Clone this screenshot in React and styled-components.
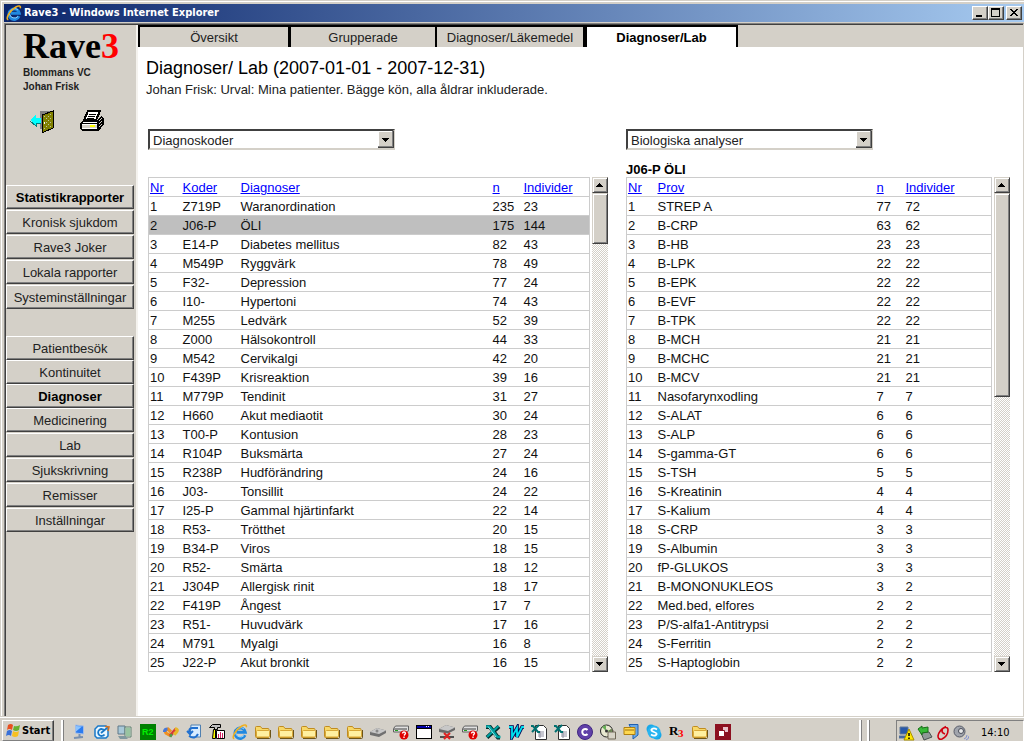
import React, { useState } from 'react'
import styled, { createGlobalStyle } from 'styled-components'

const GlobalStyle = createGlobalStyle`
  * {
    box-sizing: border-box;
  }

  body {
    margin: 0;
    background: #d4d0c8;
    color: #000;
    font-family: 'Liberation Sans', Arial, sans-serif;
    font-size: 13px;
  }

  button,
  select {
    font: inherit;
    color: inherit;
    border-radius: 0;
  }
`

const Desktop = styled.div`
  min-height: 100vh;
  display: flex;
  flex-direction: column;
`

const Window = styled.div`
  flex: 1;
  display: flex;
  flex-direction: column;
  border-top: 1px solid #d4d0c8;
  border-left: 1px solid #d4d0c8;
`

const Frame = styled.div`
  flex: 1;
  display: flex;
  flex-direction: column;
  border-top: 1px solid #fff;
  border-left: 1px solid #fff;
  padding: 2px 0 0 2px;
`

const TitleBar = styled.header`
  display: flex;
  align-items: center;
  height: 18px;
  padding: 0 2px;
  background: linear-gradient(to right, #0a246a, #a6caf0);
  color: #fff;

  h1 {
    flex: 1;
    margin: 0 0 0 2px;
    font: bold 11px/18px 'DejaVu Sans Condensed', 'DejaVu Sans', sans-serif;
  }

  svg {
    display: block;
  }
`

const CaptionButton = styled.button`
  width: 16px;
  height: 14px;
  padding: 0;
  margin-left: ${props => (props.$apart ? '2px' : '0')};
  background: #d4d0c8;
  border: 1px solid;
  border-color: #fff #404040 #404040 #fff;
  box-shadow: inset -1px -1px 0 #808080;
`

const Viewport = styled.div`
  flex: 1;
  display: flex;
  margin-top: 1px;
  border-top: 1px solid #808080;
  border-left: 1px solid #808080;
  border-right: 1px solid #d4d0c8;
  box-shadow: inset 1px 1px 0 #404040;
  padding: 1px 0 0 1px;
`

const Sidebar = styled.aside`
  flex: none;
  width: 132px;
  padding-right: 2px;
  border-right: 2px solid #f4f2ee;
`

const Logo = styled.div`
  padding: 2px 0 0 17px;
  font: bold 36px/39px 'Liberation Serif', 'Times New Roman', serif;

  span {
    color: #f00;
  }
`

const Unit = styled.div`
  padding-left: 17px;
  font-size: 10px;
  font-weight: bold;
  line-height: 14px;
  color: #222;
`

const Tools = styled.div`
  display: flex;
  gap: 26px;
  padding: 16px 0 0 24px;
  height: 91px;

  button {
    width: 24px;
    height: 24px;
    padding: 0;
    border: 0;
    background: none;
  }
`

const Nav = styled.nav`
  display: flex;
  flex-direction: column;
  gap: ${props => props.$gap}px;
  margin-top: ${props => props.$top}px;
`

const NavButton = styled.button`
  height: 24px;
  padding: 0;
  background: #d4d0c8;
  border: 1px solid;
  border-color: #fff #404040 #404040 #fff;
  box-shadow: inset -1px -1px 0 #808080;
  font-weight: ${props => (props.$active ? 'bold' : 'normal')};
  color: ${props => (props.$active ? '#000' : '#222')};
  white-space: nowrap;
`

const Main = styled.main`
  flex: 1;
  min-width: 0;
  background: #fff;
`

const Tabs = styled.div`
  display: flex;
  height: 22px;
  background: #d4d0c8;
`

const Tab = styled.button`
  width: ${props => props.$width}px;
  padding: 0;
  border: solid #000;
  border-width: 2px ${props => props.$right}px 0 ${props => props.$left}px;
  background: ${props => (props.$active ? '#fff' : '#d4d0c8')};
  font-weight: ${props => (props.$active ? 'bold' : 'normal')};
  color: ${props => (props.$active ? '#000' : '#222')};
`

const Report = styled.section`
  padding: 11px 13px 0 10px;

  h2 {
    margin: 0 0 0 -2px;
    font-size: 18px;
    font-weight: normal;
    line-height: 20px;
  }

  p {
    margin: 3px 0 30px -2px;
    line-height: 18px;
    color: #222;
  }
`

const Panels = styled.div`
  display: grid;
  grid-template-columns: 460fr 384fr;
  gap: 18px;
`

const SelectBox = styled.label`
  position: relative;
  display: block;
  width: 247px;

  select {
    display: block;
    width: 100%;
    height: 21px;
    padding: 1px 20px 0 3px;
    appearance: none;
    background: #fff;
    border: 2px solid;
    border-color: #404040 #d4d0c8 #d4d0c8 #404040;
    outline: 0;
    color: #222;
  }

  svg {
    position: absolute;
    top: 2px;
    right: 1px;
    pointer-events: none;
  }
`

const PanelTitle = styled.h3`
  height: 27px;
  margin: 0;
  padding-top: 12px;
  font-size: 13px;
  line-height: 15px;
`

const Listing = styled.div`
  display: flex;
  gap: 2px;
`

const Table = styled.table`
  flex: 1;
  min-width: 0;
  table-layout: fixed;
  border-collapse: collapse;

  th,
  td {
    height: 19px;
    padding: 1px 0 0 2px;
    border: solid #ccc;
    border-width: 1px 0;
    font-weight: normal;
    line-height: 17px;
    text-align: left;
    white-space: nowrap;
  }

  th:first-child,
  td:first-child {
    border-left-width: 1px;
    padding-left: 1px;
  }

  th:last-child,
  td:last-child {
    border-right-width: 1px;
  }

  a {
    color: #00f;
  }
`

const Row = styled.tr`
  background: ${props => (props.$selected ? '#bfbfbf' : 'transparent')};
  color: #111;
  cursor: default;
`

const ScrollBar = styled.div`
  flex: none;
  width: 16px;
  display: flex;
  flex-direction: column;
  background: repeating-conic-gradient(#fff 0 25%, #d4d0c8 0 50%) 0 0 / 2px 2px;
`

const ScrollButton = styled.button`
  width: 16px;
  height: 16px;
  padding: 0;
  background: #d4d0c8;
  border: 1px solid;
  border-color: #d4d0c8 #404040 #404040 #d4d0c8;
  box-shadow: inset 1px 1px 0 #fff, inset -1px -1px 0 #808080;

  svg {
    display: block;
  }
`

const ScrollTrack = styled.div`
  flex: 1;
`

const ScrollThumb = styled.div`
  height: ${props => props.$size}%;
  background: #d4d0c8;
  border: 1px solid;
  border-color: #d4d0c8 #404040 #404040 #d4d0c8;
  box-shadow: inset 1px 1px 0 #fff, inset -1px -1px 0 #808080;
`

const TaskBar = styled.footer`
  display: flex;
  align-items: stretch;
  height: 25px;
  padding-top: 3px;
  background: #d4d0c8;
  box-shadow: inset 0 2px 0 -1px #fff;
  border-top: 1px solid #d4d0c8;
`

const StartButton = styled.button`
  display: flex;
  align-items: center;
  gap: 1px;
  width: 52px;
  margin-left: 2px;
  padding: 0 0 0 2px;
  background: #d4d0c8;
  border: 1px solid;
  border-color: #fff #404040 #808080 #fff;
  box-shadow: inset -1px 0 0 #808080;
  font: bold 11px/16px 'DejaVu Sans Condensed', 'DejaVu Sans', sans-serif;
`

const Grip = styled.span`
  width: 3px;
  margin-left: ${props => props.$space}px;
  border: solid;
  border-width: 0 1px 0 2px;
  border-color: #808080 #808080 #fff #fff;
`

const QuickLaunch = styled.div`
  flex: 1;
  display: flex;
  align-items: center;
  gap: 7px;
  padding: 2px 0 0 7px;

  svg {
    flex: none;
    display: block;
  }
`

const Tray = styled.div`
  display: flex;
  align-items: center;
  gap: 2px;
  width: 128px;
  margin-left: 26px;
  padding: 4px 0 0 2px;
  border: 1px solid;
  border-color: #808080 #fff #fff #808080;
  border-bottom: 0;

  time {
    margin-left: 10px;
    font: 11px/16px 'DejaVu Sans Condensed', 'DejaVu Sans', sans-serif;
  }
`

const ExplorerIcon = () => (
  <svg width='16' height='16' viewBox='0 0 16 16' fill='none'>
    <path d='M13 11.2A5.2 5.2 0 1 1 13.3 8.200H5' stroke='#2088e0' strokeWidth='3' />
    <path d='M12 11.500A5 5 0 0 1 3.500 9M4 6.500a5 5 0 0 1 8-1.500' stroke='#90d4ff' strokeWidth='1' />
    <path d='M2.3 14.8C-1 14 3.8 5.5 9.5 2.2c3.5-2 5.5-1.4 4.7 1' stroke='#f0b020' strokeWidth='1.6' />
  </svg>
)

const Folder = () => (
  <svg width='16' height='16' viewBox='0 0 16 16'>
    <path d='M2 14.500h12.500q1 0 1-1V6' fill='none' stroke='#6c5418' />
    <path d='M.5 12.500v-9q0-1 1-1h4l1.500 2h6q1 0 1 1v7q0 1-1 1h-11.500q-1 0-1-1z' fill='#f8d868' stroke='#c08c20' />
    <path d='M1.500 13V7.500q0-1 1-1h11q1 0 1 1V12q0 1-1 1z' fill='#fff0a0' stroke='#d8a838' />
  </svg>
)

const Computer = () => (
  <svg width='16' height='16' viewBox='0 0 16 16'>
    <path d='M4.500 1l8 1v8l-8-1z' fill='#2c7cf0' stroke='#a0bce8' />
    <path d='M5 2l6 .5-6 5z' fill='#8cc4ff' />
    <path d='M8.500 10v3M3 14l9-1' stroke='#7890b0' strokeWidth='2' />
  </svg>
)

const Outlook = () => (
  <svg width='16' height='16' viewBox='0 0 16 16' fill='none' stroke='#1878c8'>
    <path d='M4 2h8l2 2v8l-2 2H3l-2-2V5z' fill='#e8f6ff' strokeWidth='1.500' />
    <path d='M10.500 6.500a3.500 3.500 0 1 0 0 4M7 9l6-5' strokeWidth='1.800' />
    <path d='M11 2.500l4 .5-1 4' stroke='#d07020' strokeWidth='1.500' />
  </svg>
)

const Machines = () => (
  <svg width='16' height='16' viewBox='0 0 16 16'>
    <path d='M1 2h7v8H1z' fill='#a8c8d8' stroke='#607888' />
    <path d='M8 3h6v10H8z' fill='#d8e8d8' stroke='#608070' />
    <path d='M9 5h4M9 7h4M9 9h4M9 11h4' stroke='#58a068' />
    <path d='M1 12h7l3 3H3z' fill='#8098a0' />
  </svg>
)

const Rave2 = () => (
  <svg width='16' height='16' viewBox='0 0 16 16'>
    <path d='M0 0h16v16H0z' fill='#008000' />
    <text x='2' y='11' fill='#00f000' fontSize='9' fontWeight='bold' fontFamily='Liberation Sans, sans-serif'>
      R2
    </text>
  </svg>
)

const Ribbon = () => (
  <svg width='16' height='16' viewBox='0 0 16 16' fill='none' strokeWidth='3.2'>
    <path d='M8 12L3 9q-2-3 2-4l3 3' stroke='#f09020' />
    <path d='M1.500 8q0-3 3-3' stroke='#4878d8' />
    <path d='M7 12l6-7' stroke='#d83838' />
    <path d='M12 4.500q4 1 1 4l-2 2' stroke='#e8b828' />
    <path d='M7 11l2 1' stroke='#48a048' />
  </svg>
)

const SyncDoc = () => (
  <svg width='16' height='16' viewBox='0 0 16 16'>
    <path d='M5 1h9.500v12H4z' fill='#d8ecff' stroke='#5080b0' />
    <path d='M12 4H6q-4 1-2 4M1 7l3 3 3-3M3 12q6 4 9-2' fill='none' stroke='#2070d0' strokeWidth='2' />
  </svg>
)

const ToolChart = () => (
  <svg width='16' height='16' viewBox='0 0 16 16'>
    <path d='M.5 3.500l3-3h8v3h-3v2h-3v-2z' fill='#c0c0c0' stroke='#000' />
    <path d='M4.500 5.500h2v9h-3z' fill='#ff0' stroke='#000' />
    <path d='M7.500 6.500h8v8h-8z' fill='#fff' stroke='#000' />
    <path d='M9.500 14v-4M11.500 14V8M13.500 14v-5' stroke='#d02060' />
  </svg>
)

const Drive = () => (
  <svg width='16' height='16' viewBox='0 0 16 16'>
    <path d='M0 8l7-4 9 2.500V9l-7 4-9-2z' fill='#707070' />
    <path d='M0 8l7-4 9 2.500L9 10z' fill='#c8c8c8' />
    <circle cx='7' cy='7' r='1.500' fill='#888' />
  </svg>
)

const DriveHelp = () => (
  <svg width='16' height='16' viewBox='0 0 16 16'>
    <path d='M.5 4.500l2-2.500h13v4l-1 2H.5z' fill='#e0e0e0' stroke='#606060' />
    <path d='M1 5h13' stroke='#404040' />
    <path d='M2 6.500h3' stroke='#20a020' />
    <circle cx='11' cy='11' r='4.500' fill='#e00000' />
    <path d='M9.500 9.500q0-1.500 1.500-1.500t1.500 1.500L11 11.500M11 12.500V14' fill='none' stroke='#fff' strokeWidth='1.300' />
  </svg>
)

const AppWindow = () => (
  <svg width='16' height='16' viewBox='0 0 16 16' shapeRendering='crispEdges'>
    <path d='M0 1h16v14H0z' fill='#000' />
    <path d='M1 5h14v9H1z' fill='#fff' />
    <path d='M1 2h14v2H1z' fill='#0000a8' />
    <path d='M10 2h1v1h-1zM12 2h1v1h-1z' fill='#fff' />
  </svg>
)

const DriveBroken = () => (
  <svg width='16' height='16' viewBox='0 0 16 16'>
    <path d='M0 5l7-4 9 2.500V6L9 9.500 0 8z' fill='#686868' />
    <path d='M0 5l7-4 9 2.500L9 7z' fill='#c8c8c8' />
    <path d='M1 13h14' stroke='#505050' strokeWidth='2' />
    <path d='M5 9l6 6M11 9l-6 6' stroke='#e02020' strokeWidth='2' />
  </svg>
)

const Excel = () => (
  <svg width='16' height='16' viewBox='0 0 16 16' fill='none'>
    <path d='M1 3h4l8 10.500h2M14 2.500L2 13.500' stroke='#002828' strokeWidth='4' />
    <path d='M1 2.500h3.500l8 10.500h3M13.500 2L2 13' stroke='#00a0a0' strokeWidth='2.400' />
    <path d='M3 2.500l8 10.500' stroke='#90f0f0' />
  </svg>
)

const Word = () => (
  <svg width='16' height='16' viewBox='0 0 16 16' fill='none'>
    <path d='M1 3h3v10l5-9v9l5-10h2' stroke='#000050' strokeWidth='3.600' />
    <path d='M1 3h3v10l5-9v9l5-10h2' stroke='#00e0f0' strokeWidth='1.800' />
  </svg>
)

const Sheet = () => (
  <svg width='16' height='16' viewBox='0 0 16 16' fill='none'>
    <path d='M4.500 1.500h8l3 3v11h-11z' fill='#fff' stroke='#303030' />
    <path d='M7 8h6M7 10h6M7 12h6M9 7v7' stroke='#9090a0' />
    <path d='M0 2h2l5 6h2M8 1L1 8' stroke='#007070' strokeWidth='2' />
  </svg>
)

const PurpleC = () => (
  <svg width='16' height='16' viewBox='0 0 16 16' fill='none'>
    <circle cx='8' cy='8' r='7.500' fill='#6040a8' stroke='#402880' />
    <path d='M10.500 6a3 3 0 1 0 0 4' stroke='#fff' strokeWidth='2' />
  </svg>
)

const DiscBox = () => (
  <svg width='16' height='16' viewBox='0 0 16 16'>
    <circle cx='6.500' cy='7' r='6' fill='#e8e8d0' stroke='#202020' />
    <path d='M6 7L2 3l4-2zM7 7l5-2v4z' fill='#68b058' />
    <circle cx='6.500' cy='7' r='1.500' fill='#333' />
    <path d='M8 8h7.500v7H8z' fill='#d8d4c8' stroke='#706858' />
    <path d='M10 8V6h3v2' fill='none' stroke='#706858' />
  </svg>
)

const ZipBox = () => (
  <svg width='16' height='16' viewBox='0 0 16 16'>
    <path d='M6 .5h9V11l-5 4V8z' fill='#68a8e8' stroke='#2060b0' />
    <path d='M1 3.500h11v7H1z' fill='#ffd850' stroke='#b08010' />
    <path d='M2 6h9' stroke='#a07008' />
  </svg>
)

const Skype = () => (
  <svg width='16' height='16' viewBox='0 0 16 16'>
    <circle cx='5' cy='5' r='4.500' fill='#18a8e8' />
    <circle cx='11' cy='11' r='4.500' fill='#18a8e8' />
    <circle cx='8' cy='8' r='6.500' fill='#28b4f0' />
    <path d='M11 5.500q-3-2-5-.5t2 3 2 3-5-.5' fill='none' stroke='#fff' strokeWidth='1.800' />
  </svg>
)

const Rave3Icon = () => (
  <svg width='16' height='16' viewBox='0 0 16 16' fontWeight='bold' fontFamily='Liberation Serif, serif'>
    <text x='0' y='11' fontSize='13'>
      R
    </text>
    <text x='9' y='13' fontSize='11' fill='#f00'>
      3
    </text>
  </svg>
)

const RedSquares = () => (
  <svg width='16' height='16' viewBox='0 0 16 16'>
    <path d='M0 0h16v16H0z' fill='#8c1020' />
    <path d='M8 3h5v5H8z' fill='#e8c0c8' />
    <path d='M3.500 6.500h6v6h-6z' fill='#fff' stroke='#8c1020' />
  </svg>
)

const WindowsFlag = () => (
  <svg width='16' height='16' viewBox='0 0 16 16'>
    <path d='M3 2q3-2 5 0L7 7Q4 5 2 7z' fill='#e85020' />
    <path d='M9 3q3 1 6-1l-1 5q-3 2-6 0z' fill='#68b030' />
    <path d='M2 8q3-2 5 0l-1 5q-2-2-5 0z' fill='#3870d8' />
    <path d='M8 8q3 2 6 0l-1 5q-3 2-6 0z' fill='#f8c020' />
  </svg>
)

const NetworkWarning = () => (
  <svg width='16' height='16' viewBox='0 0 16 16'>
    <path d='M1 2h8v7H1zM0 11h9v2H0z' fill='#2858a8' stroke='#607898' />
    <path d='M10 4l5 11H5z' fill='#ffe800' stroke='#a89000' />
    <path d='M10 8v3M10 12.500V14' stroke='#000' strokeWidth='1.500' />
  </svg>
)

const SafeRemove = () => (
  <svg width='16' height='16' viewBox='0 0 16 16'>
    <path d='M4 8l8-1 3 5-8 3z' fill='#909898' stroke='#485050' />
    <path d='M1 4l4-3v2l6-1v5L5 8v2z' fill='#38b838' stroke='#187018' />
  </svg>
)

const RedLoop = () => (
  <svg width='16' height='16' viewBox='0 0 16 16' fill='none'>
    <path d='M11 1.500Q4 5 3 11q0 4 4 3 6-3 6-9 0-3-3-2.500T7 6q0 2 3 3' stroke='#d00010' strokeWidth='1.600' />
  </svg>
)

const Speaker = () => (
  <svg width='16' height='16' viewBox='0 0 16 16' fill='none'>
    <circle cx='6.500' cy='6.500' r='5.500' fill='#a0a4ac' stroke='#585c68' />
    <circle cx='8' cy='6' r='2.500' fill='#e8e8e8' stroke='#484c58' />
    <path d='M11 14q3-1 3-4M13 15q3-1 3-4' stroke='#8090d0' />
  </svg>
)

const ExitDoor = () => (
  <svg width='24' height='24' viewBox='0 0 24 24' shapeRendering='crispEdges'>
    <path d='M10 1h13v18H10z' fill='#808080' />
    <path d='M12 5l11-4v17l-11 5z' fill='#808000' stroke='#000' />
    <path
      d='M14 6h1v1h-1zM16 8h1v1h-1zM18 6h1v1h-1zM20 4h1v1h-1zM20 8h1v1h-1zM18 10h1v1h-1zM16 12h1v1h-1zM20 12h1v1h-1zM18 14h1v1h-1zM16 16h1v1h-1zM20 16h1v1h-1zM14 18h1v1h-1z'
      fill='#c0c0a0'
    />
    <path d='M14 12h1v2h-1z' fill='#fff' />
    <path d='M0 10l6-5v3h5v5H6v3z' fill='#0ff' />
    <path d='M0 11l6 5v-3h5' fill='none' stroke='#008080' />
  </svg>
)

const Printer = () => (
  <svg width='24' height='24' viewBox='0 0 24 24' shapeRendering='crispEdges'>
    <path d='M8 1h12l-4 9H4z' fill='#fff' stroke='#000' strokeWidth='2' />
    <path d='M9 4h7M8 6h7M7 8h7' stroke='#000' />
    <path d='M3 10h14l4-4 3 2v6l-5 7H2l-2-3v-5z' fill='#000' />
    <path d='M3 12h14l-1 1H2z' fill='#fff' />
    <path d='M2 14h15v1H2zM2 18h15v1H2z' fill='#fff' />
    <path d='M2 15h15v3H2z' fill='#d4d0c8' />
    <path d='M10 15h5v2h-5z' fill='#ff0' />
    <path d='M19 11l3-3M19 14l3-3M19 17l3-3' stroke='#d4d0c8' />
  </svg>
)

const ArrowUp = () => (
  <svg width='14' height='14' shapeRendering='crispEdges'>
    <path d='M6 5h1v1h1v1h1v1h1v1H3V8h1V7h1V6h1z' />
  </svg>
)

const ArrowDown = () => (
  <svg width='14' height='14' shapeRendering='crispEdges'>
    <path d='M3 5h7v1H9v1H8v1H7v1H6V8H5V7H4V6H3z' />
  </svg>
)

const SelectArrow = () => (
  <svg width='16' height='17' shapeRendering='crispEdges'>
    <path d='M0 0h16v17H0z' fill='#404040' />
    <path d='M0 0h15v16H0z' fill='#808080' />
    <path d='M0 0h14v15H0z' fill='#fff' />
    <path d='M1 1h13v14H1z' fill='#d4d0c8' />
    <path d='M4 7h7v1h-1v1H9v1H8v1H7v-1H6V9H5V8H4z' />
  </svg>
)

const launchIcons = [
  Computer, Outlook, Machines, Rave2, Ribbon, SyncDoc, ToolChart, ExplorerIcon,
  Folder, Folder, Folder, Folder, Folder, Drive, DriveHelp, AppWindow,
  DriveBroken, DriveHelp, Excel, Word, Sheet, Sheet, PurpleC, DiscBox,
  ZipBox, Skype, Rave3Icon, Folder, RedSquares
]

const trayIcons = [NetworkWarning, SafeRemove, RedLoop, Speaker]

const menus = [
  {
    top: 0,
    gap: 1,
    items: ['Statistikrapporter', 'Kronisk sjukdom', 'Rave3 Joker', 'Lokala rapporter', 'Systeminställningar']
  },
  { top: 27, gap: 0, items: ['Patientbesök', 'Kontinuitet', 'Diagnoser', 'Medicinering'] },
  { top: 1, gap: 1, items: ['Lab', 'Sjukskrivning', 'Remisser', 'Inställningar'] }
]

const activeItems = ['Statistikrapporter', 'Diagnoser']

const tabs = [
  { label: 'Översikt', width: 151, left: 2, right: 1 },
  { label: 'Grupperade', width: 147, left: 2, right: 1 },
  { label: 'Diagnoser/Läkemedel', width: 149, left: 1, right: 2 },
  { label: 'Diagnoser/Lab', width: 153, left: 2, right: 2 }
]

const diagnoses = [
  ['Z719P', 'Waranordination', 235, 23],
  ['J06-P', 'ÖLI', 175, 144],
  ['E14-P', 'Diabetes mellitus', 82, 43],
  ['M549P', 'Ryggvärk', 78, 49],
  ['F32-', 'Depression', 77, 24],
  ['I10-', 'Hypertoni', 74, 43],
  ['M255', 'Ledvärk', 52, 39],
  ['Z000', 'Hälsokontroll', 44, 33],
  ['M542', 'Cervikalgi', 42, 20],
  ['F439P', 'Krisreaktion', 39, 16],
  ['M779P', 'Tendinit', 31, 27],
  ['H660', 'Akut mediaotit', 30, 24],
  ['T00-P', 'Kontusion', 28, 23],
  ['R104P', 'Buksmärta', 27, 24],
  ['R238P', 'Hudförändring', 24, 16],
  ['J03-', 'Tonsillit', 24, 22],
  ['I25-P', 'Gammal hjärtinfarkt', 22, 14],
  ['R53-', 'Trötthet', 20, 15],
  ['B34-P', 'Viros', 18, 15],
  ['R52-', 'Smärta', 18, 12],
  ['J304P', 'Allergisk rinit', 18, 17],
  ['F419P', 'Ångest', 17, 7],
  ['R51-', 'Huvudvärk', 17, 16],
  ['M791', 'Myalgi', 16, 8],
  ['J22-P', 'Akut bronkit', 16, 15]
]

const tests = [
  ['STREP A', 77, 72],
  ['B-CRP', 63, 62],
  ['B-HB', 23, 23],
  ['B-LPK', 22, 22],
  ['B-EPK', 22, 22],
  ['B-EVF', 22, 22],
  ['B-TPK', 22, 22],
  ['B-MCH', 21, 21],
  ['B-MCHC', 21, 21],
  ['B-MCV', 21, 21],
  ['Nasofarynxodling', 7, 7],
  ['S-ALAT', 6, 6],
  ['S-ALP', 6, 6],
  ['S-gamma-GT', 6, 6],
  ['S-TSH', 5, 5],
  ['S-Kreatinin', 4, 4],
  ['S-Kalium', 4, 4],
  ['S-CRP', 3, 3],
  ['S-Albumin', 3, 3],
  ['fP-GLUKOS', 3, 3],
  ['B-MONONUKLEOS', 3, 2],
  ['Med.bed, elfores', 2, 2],
  ['P/S-alfa1-Antitrypsi', 2, 2],
  ['S-Ferritin', 2, 2],
  ['S-Haptoglobin', 2, 2]
]

const Select = ({ label, option }) => (
  <SelectBox>
    <select aria-label={label}>
      <option>{option}</option>
    </select>
    <SelectArrow />
  </SelectBox>
)

const DataList = ({ columns, rows, selected, onSelect, thumb }) => (
  <Listing>
    <Table>
      <colgroup>
        {columns.map(column => (
          <col key={column.name} width={column.width} />
        ))}
      </colgroup>
      <thead>
        <tr>
          {columns.map(column => (
            <th key={column.name}>
              <a href='#sort'>{column.name}</a>
            </th>
          ))}
        </tr>
      </thead>
      <tbody>
        {rows.map((row, index) => (
          <Row
            key={row[0]}
            $selected={index === selected}
            onClick={() => onSelect && onSelect(index)}
          >
            <td>{index + 1}</td>
            {row.map((value, i) => (
              <td key={i}>{value}</td>
            ))}
          </Row>
        ))}
      </tbody>
    </Table>
    <ScrollBar>
      <ScrollButton aria-label='Upp'>
        <ArrowUp />
      </ScrollButton>
      <ScrollTrack>
        <ScrollThumb $size={thumb} />
      </ScrollTrack>
      <ScrollButton aria-label='Ned'>
        <ArrowDown />
      </ScrollButton>
    </ScrollBar>
  </Listing>
)

const App = () => {
  const [tab, setTab] = useState(3)
  const [selected, setSelected] = useState(1)

  return (
    <Desktop>
      <GlobalStyle />
      <Window>
        <Frame>
          <TitleBar>
            <ExplorerIcon />
            <h1>Rave3 - Windows Internet Explorer</h1>
            <CaptionButton aria-label='Minimera'>
              <svg width='14' height='12' shapeRendering='crispEdges'>
                <path d='M3 8h6v2H3z' />
              </svg>
            </CaptionButton>
            <CaptionButton aria-label='Maximera'>
              <svg width='14' height='12' shapeRendering='crispEdges'>
                <path d='M2 1h9v9H2zM3 3v6h7V3z' fillRule='evenodd' />
              </svg>
            </CaptionButton>
            <CaptionButton $apart aria-label='Stäng'>
              <svg width='14' height='12' shapeRendering='crispEdges'>
                <path d='M3 2h2v1h1v1h2V3h1V2h2v1h-1v1H9v1H8v1h1v1h1v1h1v1H9V8H8V7H6v1H5v1H3V8h1V7h1V6h1V5H5V4H4V3H3z' />
              </svg>
            </CaptionButton>
          </TitleBar>
          <Viewport>
            <Sidebar>
              <Logo>
                Rave<span>3</span>
              </Logo>
              <Unit>
                Blommans VC
                <br />
                Johan Frisk
              </Unit>
              <Tools>
                <button aria-label='Avsluta'>
                  <ExitDoor />
                </button>
                <button aria-label='Skriv ut'>
                  <Printer />
                </button>
              </Tools>
              {menus.map(menu => (
                <Nav key={menu.items[0]} $top={menu.top} $gap={menu.gap}>
                  {menu.items.map(item => (
                    <NavButton key={item} $active={activeItems.includes(item)}>
                      {item}
                    </NavButton>
                  ))}
                </Nav>
              ))}
            </Sidebar>
            <Main>
              <Tabs>
                {tabs.map((item, index) => (
                  <Tab
                    key={item.label}
                    $width={item.width}
                    $left={item.left}
                    $right={item.right}
                    $active={index === tab}
                    onClick={() => setTab(index)}
                  >
                    {item.label}
                  </Tab>
                ))}
              </Tabs>
              <Report>
                <h2>Diagnoser/ Lab (2007-01-01 - 2007-12-31)</h2>
                <p>Johan Frisk: Urval: Mina patienter. Bägge kön, alla åldrar inkluderade.</p>
                <Panels>
                  <div>
                    <Select label='Urval av koder' option='Diagnoskoder' />
                    <PanelTitle />
                    <DataList
                      columns={[
                        { name: 'Nr', width: 32 },
                        { name: 'Koder', width: 58 },
                        { name: 'Diagnoser' },
                        { name: 'n', width: 31 },
                        { name: 'Individer', width: 68 }
                      ]}
                      rows={diagnoses}
                      selected={selected}
                      onSelect={setSelected}
                      thumb={11}
                    />
                  </div>
                  <div>
                    <Select label='Urval av analyser' option='Biologiska analyser' />
                    <PanelTitle>J06-P ÖLI</PanelTitle>
                    <DataList
                      columns={[
                        { name: 'Nr', width: 29 },
                        { name: 'Prov' },
                        { name: 'n', width: 29 },
                        { name: 'Individer', width: 88 }
                      ]}
                      rows={tests}
                      thumb={44}
                    />
                  </div>
                </Panels>
              </Report>
            </Main>
          </Viewport>
        </Frame>
      </Window>
      <TaskBar>
        <StartButton>
          <WindowsFlag />
          Start
        </StartButton>
        <Grip $space={7} />
        <QuickLaunch>
          {launchIcons.map((Icon, index) => (
            <Icon key={index} />
          ))}
        </QuickLaunch>
        <Grip $space={0} />
        <Grip $space={5} />
        <Tray>
          {trayIcons.map((Icon, index) => (
            <Icon key={index} />
          ))}
          <time>14:10</time>
        </Tray>
      </TaskBar>
    </Desktop>
  )
}

export default App
